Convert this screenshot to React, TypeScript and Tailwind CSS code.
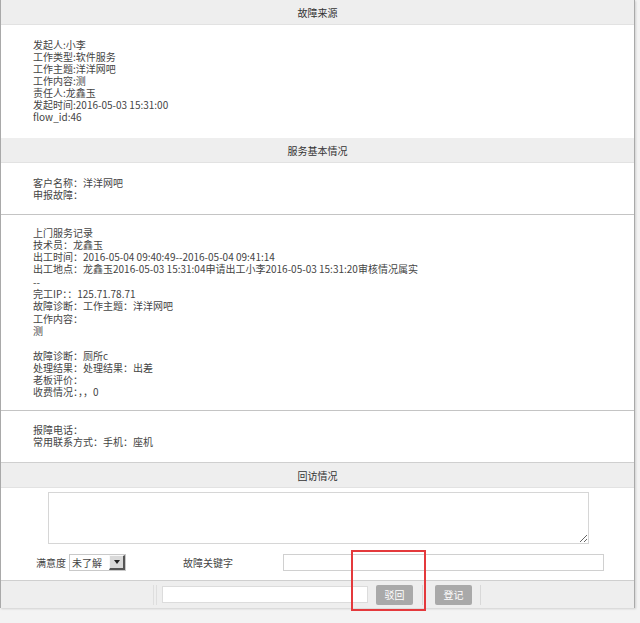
import React from 'react'

const font = { fontFamily: '"Noto Sans CJK SC", "Noto Sans", sans-serif' }

const Header = ({ title }: { title: string }) => (
  <div className="h-[25px] bg-[#eeeeee] border-b border-[#e2e2e2] flex items-center justify-center text-[10px] text-[#333]">
    {title}
  </div>
)

const Lines = ({ lines, className, rowClass = 'h-[12.3px]' }: { lines: string[]; className: string; rowClass?: string }) => (
  <div className={`pl-[32px] text-[10px] leading-[12px] text-[#444] ${className}`}>
    {lines.map((line, i) => (
      <div key={i} className={`${rowClass} whitespace-nowrap`}>
        {line}
      </div>
    ))}
  </div>
)

const source = [
  '发起人:小李',
  '工作类型:软件服务',
  '工作主题:洋洋网吧',
  '工作内容:测',
  '责任人:龙鑫玉',
  '发起时间:2016-05-03 15:31:00',
  'flow_id:46',
]

const basic = ['客户名称：洋洋网吧', '申报故障：']

const record = [
  '上门服务记录',
  '技术员：龙鑫玉',
  '出工时间：2016-05-04 09:40:49--2016-05-04 09:41:14',
  '出工地点：龙鑫玉2016-05-03 15:31:04申请出工小李2016-05-03 15:31:20审核情况属实',
  '--',
  '完工IP：：125.71.78.71',
  '故障诊断：工作主题：洋洋网吧',
  '工作内容：',
  '测',
  '',
  '故障诊断：厕所c',
  '处理结果：处理结果：出差',
  '老板评价：',
  '收费情况：，，0',
]

const contact = ['报障电话：', '常用联系方式：手机：座机']

export default function App() {
  return (
    <div className="relative w-[640px] h-[623px] bg-[#f3f3f3] overflow-hidden" style={font}>
      <div className="w-[635px] bg-white border-l border-r border-[#a9a9a9] shadow-[1px_1px_2px_rgba(0,0,0,0.15)]">
        {/* 故障来源 */}
        <Header title="故障来源" />
        <Lines lines={source} className="pt-[14px] pb-[15px]" rowClass="h-[12px]" />

        {/* 服务基本情况 */}
        <Header title="服务基本情况" />
        <Lines lines={basic} className="pt-[14px] pb-[12px] border-b border-[#c4c4c4]" />
        <Lines lines={record} className="pt-[12px] pb-[11px] border-b border-[#c4c4c4]" />
        <Lines lines={contact} className="pt-[13px] pb-[14px]" />

        {/* 回访情况 */}
        <div className="border-t border-[#cfcfcf]">
          <Header title="回访情况" />
        </div>
        <div className="pt-[4px] pl-[47px]">
          <textarea className="block w-[541px] h-[52px] border border-[#d6d6d6] resize-y outline-none" />
        </div>

        <div className="h-[36px] flex items-center text-[10px] text-[#444]">
          <span className="ml-[35px] mr-[3px]">满意度</span>
          <div className="w-[57px] h-[17px] border border-[#c9c9c9] flex items-center justify-between">
            <span className="pl-[2px]">未了解</span>
            <span className="w-[16px] h-[15px] bg-[#d9d9d9] border-l border-t border-[#f8f8f8] border-r-2 border-b-2 border-r-[#555] border-b-[#555] flex items-center justify-center">
              <svg width="6" height="4" viewBox="0 0 6 4">
                <path d="M0 0h6L3 4z" fill="#222" />
              </svg>
            </span>
          </div>
          <span className="ml-[57px]">故障关键字</span>
          <input className="ml-[50px] w-[321px] h-[17px] border border-[#d0d0d0] outline-none" />
        </div>

        {/* footer */}
        <div className="h-[28px] bg-[#eeeeee] border-t border-[#cfcfcf] flex items-center">
          <div className="ml-[152px] w-[4px] h-[20px] border-l border-r border-[#dedede]" />
          <input className="ml-[5px] w-[206px] h-[17px] bg-white border border-[#dcdcdc] outline-none" />
          <div className="ml-[8px] w-[37px] h-[20px] rounded-[2px] bg-[#a9a9a9] text-white text-[10px] flex items-center justify-center">
            驳回
          </div>
          <div className="ml-[9px] w-px h-[20px] bg-[#d8d8d8]" />
          <div className="ml-[12px] w-[37px] h-[20px] rounded-[2px] bg-[#a9a9a9] text-white text-[10px] flex items-center justify-center">
            登记
          </div>
          <div className="ml-[8px] w-px h-[20px] bg-[#d8d8d8]" />
        </div>
      </div>

      {/* annotation box */}
      <div className="absolute left-[351px] top-[550px] w-[75px] h-[61px] border-2 border-[#e4393c]" />
    </div>
  )
}
